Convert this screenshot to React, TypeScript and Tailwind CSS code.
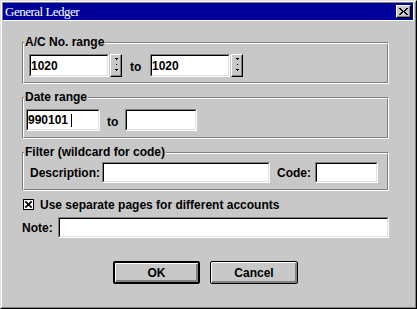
import React from "react";

const BG = "bg-[#c8c8c8]";

function Field({
  className = "",
  children,
}: {
  className?: string;
  children?: React.ReactNode;
}) {
  return (
    <div
      className={`shrink-0 border border-t-[#808080] border-l-[#808080] border-r-white border-b-white ${className}`}
    >
      <div className="w-full h-full border border-t-black border-l-black border-r-[#dfdfdf] border-b-[#dfdfdf] bg-white flex items-center text-[12px] font-bold text-black leading-none">
        {children}
      </div>
    </div>
  );
}

function Spinner() {
  return (
    <div
      className={`shrink-0 w-[12px] h-[23px] border border-t-white border-l-white border-r-black border-b-black ${BG} shadow-[inset_-1px_-1px_0_#808080] flex justify-center`}
    >
      <svg width="5" height="21" viewBox="0 0 5 21" shapeRendering="crispEdges">
        <rect x="1" y="3" width="3" height="1" fill="#000" />
        <rect x="2" y="4" width="1" height="1" fill="#000" />
        <rect x="2" y="9" width="1" height="1" fill="#000" />
        <rect x="1" y="14" width="3" height="1" fill="#000" />
        <rect x="2" y="15" width="1" height="1" fill="#000" />
      </svg>
    </div>
  );
}

function Group({
  label,
  className = "",
  innerClass = "",
  children,
}: {
  label: string;
  className?: string;
  innerClass?: string;
  children?: React.ReactNode;
}) {
  return (
    <div
      className={`relative w-[367px] border border-t-[#808080] border-l-[#808080] border-r-white border-b-white ${className}`}
    >
      <div
        className={`h-full border border-t-white border-l-white border-r-[#808080] border-b-[#808080] ${innerClass}`}
      >
        {children}
      </div>
      <div
        className={`absolute left-[1px] top-[-8px] h-[14px] leading-[14px] px-[1px] ${BG} text-[12px] font-bold text-black`}
      >
        {label}
      </div>
    </div>
  );
}

function Button({
  label,
  isDefault,
  className = "",
}: {
  label: string;
  isDefault?: boolean;
  className?: string;
}) {
  return (
    <div
      className={`h-[23px] ${isDefault ? "border-2" : "border"} border-black rounded-[2px] ${BG} shadow-[inset_1px_1px_0_#fff,inset_-2px_-2px_0_#808080] flex items-center justify-center text-[12px] font-bold text-black leading-none ${className}`}
    >
      {label}
    </div>
  );
}

export default function App() {
  const xRows: [number, number, number][] = [
    [0, 0, 2],
    [7, 0, 2],
    [1, 1, 2],
    [6, 1, 2],
    [2, 2, 2],
    [5, 2, 2],
    [3, 3, 3],
    [2, 4, 2],
    [5, 4, 2],
    [1, 5, 2],
    [6, 5, 2],
    [0, 6, 2],
    [7, 6, 2],
  ];
  return (
    <div className="w-[417px] h-[309px] border border-t-[#dfdfdf] border-l-[#dfdfdf] border-r-black border-b-black font-['Liberation_Sans',Arial,sans-serif]">
      <div
        className={`w-full h-full border border-t-white border-l-white border-r-[#808080] border-b-[#808080] ${BG} flex flex-col`}
      >
        {/* Title bar */}
        <div className="mr-[1px] h-[19px] shrink-0 border border-t-[#808080] border-l-[#808080] border-r-white border-b-white">
          <div className="h-full bg-[#00009b] flex items-center justify-between pl-[2px] pr-[2px]">
            <span className="font-['Liberation_Serif',serif] text-white text-[13px] tracking-[-0.5px] leading-none">
              General Ledger
            </span>
            <div
              className={`w-[15px] h-[13px] border border-t-white border-l-white border-r-black border-b-black ${BG} shadow-[inset_-1px_-1px_0_#808080] flex items-center justify-center`}
            >
              <svg width="9" height="7" viewBox="0 0 9 7" shapeRendering="crispEdges">
                {xRows.map(([x, y, w], i) => (
                  <rect key={i} x={x} y={y} width={w} height="1" fill="#000" />
                ))}
              </svg>
            </div>
          </div>
        </div>

        {/* Body */}
        <div className="flex flex-col pl-[20px] text-black">
          <Group label="A/C No. range" className="mt-[21px] h-[42px]" innerClass="pl-[5px] pt-[10px]">
            <div className="flex items-center">
              <Field className="w-[80px] h-[23px]">1020</Field>
              <div className="ml-[1px]">
                <Spinner />
              </div>
              <span className="ml-[8px] w-[20px] text-[12px] font-bold pt-[3px]">to</span>
              <Field className="w-[80px] h-[23px]">1020</Field>
              <div className="ml-[1px]">
                <Spinner />
              </div>
            </div>
          </Group>

          <Group label="Date range" className="mt-[13px] h-[42px]" innerClass="pl-[2px] pt-[10px]">
            <div className="flex items-center">
              <Field className="w-[74px] h-[22px]">
                <span>990101</span>
                <span className="ml-[3px] w-[1px] h-[13px] bg-black" />
              </Field>
              <span className="ml-[7px] w-[18px] text-[12px] font-bold pt-[3px]">to</span>
              <Field className="w-[72px] h-[22px]" />
            </div>
          </Group>

          <Group
            label="Filter (wildcard for code)"
            className="mt-[13px] h-[39px]"
            innerClass="pl-[6px] pt-[8px]"
          >
            <div className="flex items-center">
              <span className="w-[72px] text-[12px] font-bold">Description:</span>
              <Field className="w-[168px] h-[21px]" />
              <span className="ml-[7px] w-[38px] text-[12px] font-bold">Code:</span>
              <Field className="w-[63px] h-[21px]" />
            </div>
          </Group>

          <div className="mt-[8px] h-[11px] flex items-center">
            <svg
              className="ml-[1px] shrink-0"
              width="11"
              height="11"
              viewBox="0 0 11 11"
            >
              <rect x="0.5" y="0.5" width="10" height="10" fill="#fff" stroke="#000" />
              <line x1="2.3" y1="2.3" x2="8.7" y2="8.7" stroke="#000" strokeWidth="1.7" />
              <line x1="8.7" y1="2.3" x2="2.3" y2="8.7" stroke="#000" strokeWidth="1.7" />
            </svg>
            <span className="ml-[6px] text-[12px] font-bold whitespace-nowrap">
              Use separate pages for different accounts
            </span>
          </div>

          <div className="mt-[7px] flex items-center">
            <span className="w-[36px] text-[12px] font-bold">Note:</span>
            <Field className="w-[331px] h-[21px]" />
          </div>

          <div className="mt-[23px] flex">
            <Button label="OK" isDefault className="ml-[91px] w-[87px]" />
            <Button label="Cancel" className="ml-[10px] w-[88px]" />
          </div>
        </div>
      </div>
    </div>
  );
}
